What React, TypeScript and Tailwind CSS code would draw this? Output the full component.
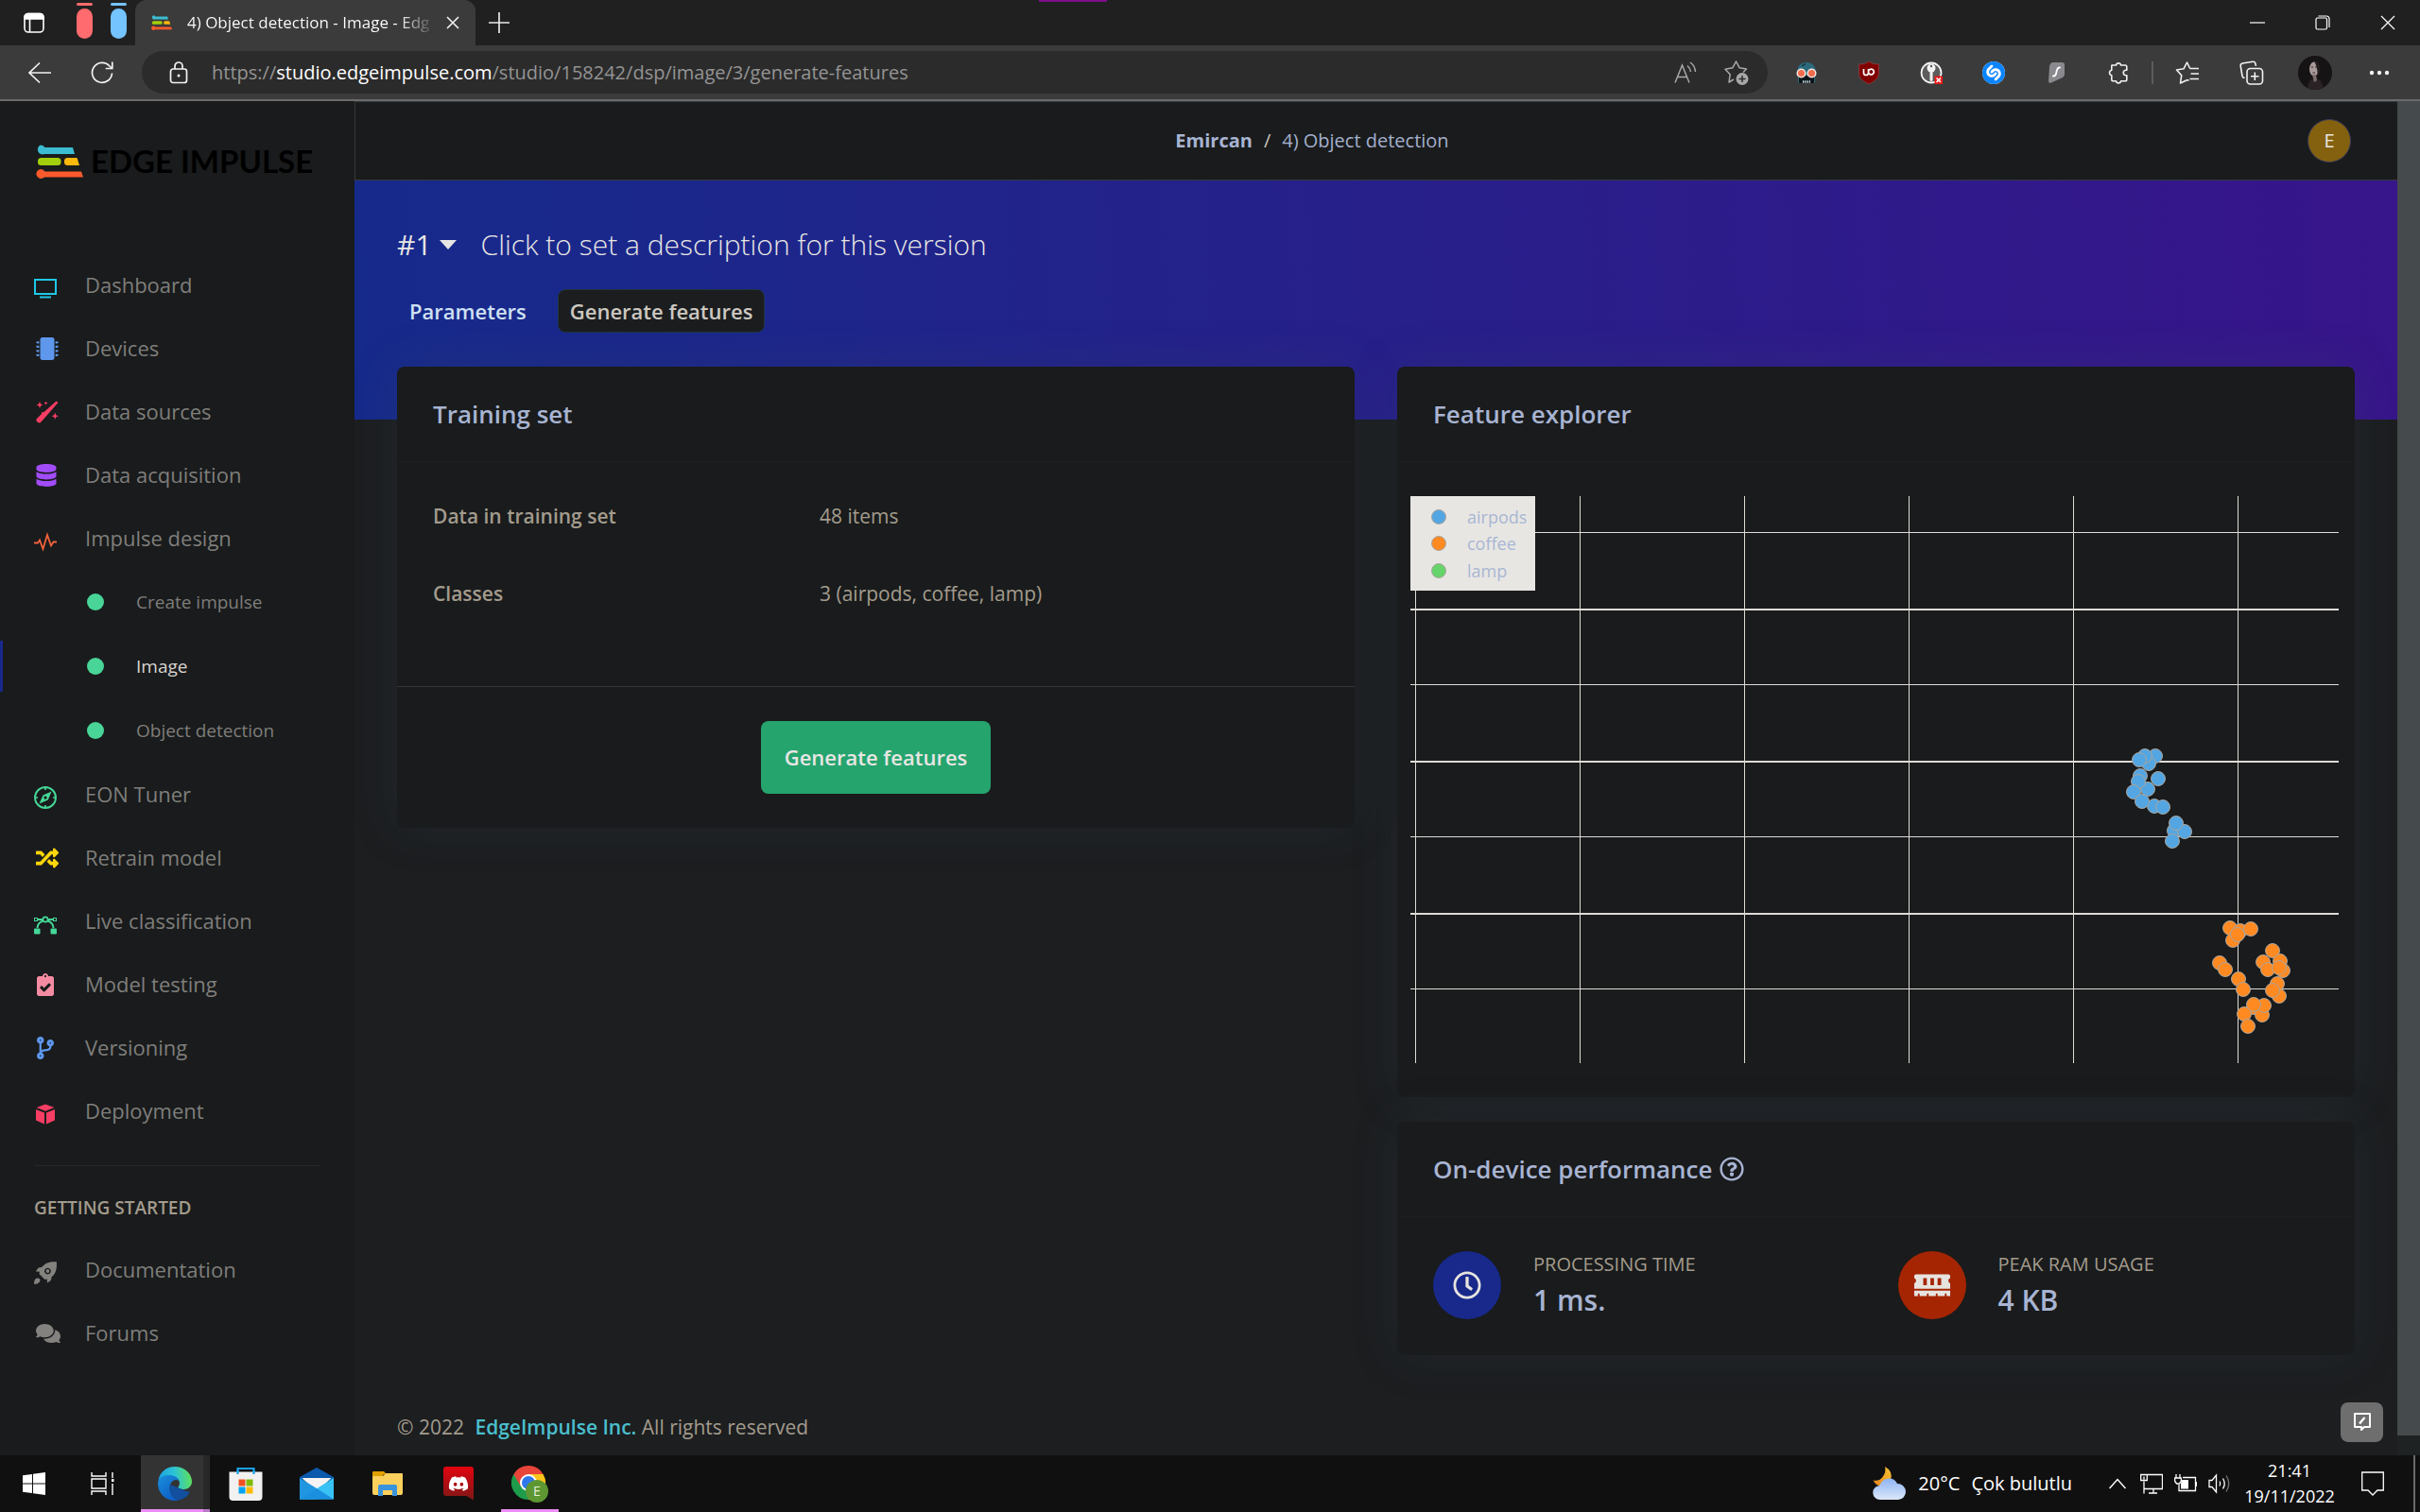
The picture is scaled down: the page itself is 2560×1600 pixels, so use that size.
import React from "react";
import {
  FaMicrochip,
  FaDatabase,
  FaRandom,
  FaClipboardCheck,
  FaCodeBranch,
  FaComments,
  FaRegQuestionCircle,
  FaRegClock,
  FaMemory,
  FaDiscord,
} from "react-icons/fa";
import { SiShazam } from "react-icons/si";

/* ---------- browser chrome ---------- */

function EdgeImpulseMark({ className }: { className: string }) {
  return (
    <svg viewBox="0 0 50 36" className={className} aria-hidden="true">
      <path d="M5 0a5 5 0 0 1 4.500 2.500H39L41 9.500H9A5 5 0 1 1 5 0Z" fill="#3bbcd0" transform="translate(0 .5)" />
      <rect x="2" y="14" width="24.500" height="8" rx="3.500" fill="#a3cf0c" />
      <path d="M33.500 14h10l2.500 8H33.500a3.500 3.500 0 0 1-3.500-3.500v-1a3.500 3.500 0 0 1 3.500-3.500Z" fill="#fdb80e" />
      <path d="M5 26a5 5 0 0 1 4.500 2.500H48L50 34.500H9A5 5 0 1 1 5 26Z" fill="#fb5a2c" />
    </svg>
  );
}

function TabStrip() {
  return (
    <div className="flex h-12 items-stretch bg-[#202020]">
      <button aria-label="Tab actions" className="flex w-[72px] items-center justify-center">
        <svg viewBox="0 0 24 24" className="size-6" fill="none" stroke="#fff" strokeWidth="1.600">
          <rect x="2" y="2.500" width="20" height="19.500" rx="4" />
          <path d="M2 8V6a3.500 3.500 0 0 1 3.500-3.500h13A3.500 3.500 0 0 1 22 6v2Z" fill="#fff" />
          <path d="M7.500 8v14" />
        </svg>
      </button>
      <div className="ml-[9px] flex w-[17px] flex-col gap-[3px] pt-[3px]">
        <span className="h-[3px] rounded-sm bg-[#ff6b6e]" />
        <button aria-label="Red tab group" className="h-8 rounded-full bg-[#ff6b6e]" />
      </div>
      <div className="ml-[19px] flex w-[17px] flex-col gap-[3px] pt-[3px]">
        <span className="h-[3px] rounded-sm bg-[#74c4ff]" />
        <button aria-label="Blue tab group" className="h-8 rounded-full bg-[#74c4ff]" />
      </div>
      <div className="ml-[9px] flex w-[360px] items-center rounded-t-xl bg-[#3b3b3b] pl-[17px] pr-4">
        <EdgeImpulseMark className="h-4 w-[22px] shrink-0" />
        <span className="ml-4 flex-1 whitespace-nowrap bg-gradient-to-r from-white from-85% to-transparent bg-clip-text text-[17px] leading-6 text-transparent">
          4) Object detection - Image - Edg
        </span>
        <button aria-label="Close tab" className="ml-2.5">
          <svg viewBox="0 0 16 16" className="size-4" stroke="#f2f2f2" strokeWidth="1.600">
            <path d="M2 2l12 12M14 2L2 14" />
          </svg>
        </button>
      </div>
      <button aria-label="New tab" className="ml-3.5">
        <svg viewBox="0 0 22 22" className="size-[22px]" stroke="#e8e8e8" strokeWidth="1.700">
          <path d="M11 0v22M0 11h22" />
        </svg>
      </button>
      <div className="ml-auto flex items-center">
        <button aria-label="Minimize" className="flex w-[69px] justify-center">
          <svg viewBox="0 0 16 16" className="size-4" stroke="#fff" strokeWidth="1.200">
            <path d="M0 8h16" />
          </svg>
        </button>
        <button aria-label="Restore" className="flex w-[69px] justify-center">
          <svg viewBox="0 0 16 16" className="size-4" stroke="#fff" strokeWidth="1.200" fill="none">
            <rect x="1" y="3" width="11.500" height="12" rx="1.500" />
            <path d="M3.500 1h8.500a3 3 0 0 1 3 3v9" />
          </svg>
        </button>
        <button aria-label="Close" className="flex w-[69px] justify-center">
          <svg viewBox="0 0 16 16" className="size-4" stroke="#fff" strokeWidth="1.200">
            <path d="M1 1l14 14M15 1L1 15" />
          </svg>
        </button>
      </div>
    </div>
  );
}

function ExtensionIcons() {
  return (
    <>
      <button aria-label="Mask extension" className="flex w-[66px] justify-center">
        <svg viewBox="0 0 24 24" className="size-6">
          <path d="M2 12C2 4 7 1 12 1s10 3 10 11l-1 5v6H3v-6Z" fill="#2b6a7c" />
          <path d="M4 15h16v8H4Z" fill="#0e1518" />
          <path d="M7 5q2-2 4-2" stroke="#153c48" strokeWidth="1.500" />
          <circle cx="6.500" cy="12.500" r="4.300" fill="#ee6c4d" stroke="#f6e6dd" strokeWidth="1.500" />
          <circle cx="17.500" cy="12.500" r="4.300" fill="#ee6c4d" stroke="#f6e6dd" strokeWidth="1.500" />
          <path d="M8 21.500h8" stroke="#cfe6ee" strokeWidth="2.500" strokeDasharray="1.300 1" />
        </svg>
      </button>
      <button aria-label="uBlock Origin" className="flex w-[66px] justify-center">
        <svg viewBox="0 0 24 26" className="h-[26px] w-6">
          <path d="M12 1c3 2.500 6 3 10.500 3v9c0 6-4 8.500-10.500 12C5.500 21.500 1.500 19 1.500 13V4C6 4 9 3.500 12 1Z" fill="#800000" stroke="#a24a4a" strokeWidth=".6" />
          <path d="M6.500 9v4a2.500 2.500 0 0 0 5 0V9M11.500 12a2.900 2.900 0 1 0 0-.1" fill="none" stroke="#fff" strokeWidth="1.700" />
        </svg>
      </button>
      <button aria-label="Password manager" className="flex w-[66px] justify-center">
        <svg viewBox="0 0 24 24" className="size-6">
          <circle cx="12" cy="12" r="10.500" fill="#5c5c5c" stroke="#f2f2f2" strokeWidth="1.800" />
          <circle cx="12" cy="7" r="4.500" fill="#f2f2f2" />
          <circle cx="12" cy="5" r="1.200" fill="#555" />
          <path d="M10.500 10h3v10l-1.500 1.500-1.500-1.500Z" fill="#f2f2f2" />
          <rect x="15.500" y="15.500" width="8.500" height="8.500" fill="#e81818" />
          <path d="M17.500 17.500l4.500 4.500M22 17.500L17.500 22" stroke="#fff" strokeWidth="1.600" />
        </svg>
      </button>
      <button aria-label="Shazam" className="flex w-[66px] justify-center">
        <span className="rounded-full bg-white">
          <SiShazam className="size-6 text-[#0a84ff]" />
        </span>
      </button>
      <button aria-label="Surfshark" className="flex w-[66px] justify-center">
        <svg viewBox="0 0 24 24" className="size-6">
          <path d="M9 1h9.500A2.500 2.500 0 0 1 21 3.500V13q0 3-3 4.500L7 22.500q-3 1-3-1.500L5 6q.5-5 4-5Z" fill="#8a8a8e" />
          <path d="M16 6.500c-5.500-.5-1.500 9.500-7 9" fill="none" stroke="#fff" strokeWidth="1.800" strokeLinecap="round" />
        </svg>
      </button>
      <button aria-label="Extensions" className="flex w-[66px] justify-center">
        <svg viewBox="0 0 24 24" className="size-6" fill="none" stroke="#f0f0f0" strokeWidth="1.600" strokeLinejoin="round">
          <path d="M5 4h4.500a2.600 2.600 0 0 1 5.100 0H19a1.800 1.800 0 0 1 1.800 1.800V9.300h-1.300a2.800 2.800 0 0 0 0 5.500h1.300V19A1.800 1.800 0 0 1 19 20.800h-4.400a2.600 2.600 0 0 1-5.100 0H6.600A1.800 1.800 0 0 1 4.800 19v-4.200a2.800 2.800 0 0 1 0-5.500V5Z" />
        </svg>
      </button>
    </>
  );
}

function Toolbar() {
  return (
    <div className="flex h-[59px] items-center border-b-2 border-[#6b6b6b] bg-[#3b3b3b]">
      <button aria-label="Back" className="ml-[30px]">
        <svg viewBox="0 0 24 24" className="size-6" fill="none" stroke="#f2f2f2" strokeWidth="1.700">
          <path d="M24 12H1M12 1.500L1 12l11 10.500" />
        </svg>
      </button>
      <button aria-label="Refresh" className="ml-[42px]">
        <svg viewBox="0 0 24 24" className="size-6" fill="none" stroke="#f2f2f2" strokeWidth="1.700">
          <path d="M22.500 12.500A10.500 10.500 0 1 1 20 5l2.500 2.500" />
          <path d="M22.800 .5v7h-7" />
        </svg>
      </button>
      <div className="ml-[30px] flex h-[45px] flex-1 items-center rounded-full bg-[#2b2b2b] pl-[27px] pr-5">
        <svg viewBox="0 0 24 24" className="size-6 shrink-0" fill="none" stroke="#f2f2f2" strokeWidth="1.700">
          <rect x="3.500" y="8" width="17" height="14.500" rx="2.500" />
          <path d="M8 8V5a4 4 0 0 1 8 0v3" />
          <circle cx="12" cy="15" r="1.500" fill="#f2f2f2" stroke="none" />
        </svg>
        <span className="ml-[23px] flex-1 text-xl text-[#949494]">
          https://<span className="text-white">studio.edgeimpulse.com</span>/studio/158242/dsp/image/3/generate-features
        </span>
        <button aria-label="Read aloud">
          <svg viewBox="0 0 24 24" className="size-6" fill="none" stroke="#a8a8a8" strokeWidth="1.500">
            <path d="M1 22.500L8.500 4 16 22.500M3.800 16.500h9.600M14 4.500q3 2.500 3.500 6.500M17 1q5 3.500 5.500 10" />
          </svg>
        </button>
        <button aria-label="Add to favorites" className="ml-[29px]">
          <svg viewBox="0 0 26 26" className="size-[26px]" fill="none" stroke="#a8a8a8" strokeWidth="1.500" strokeLinejoin="round">
            <path d="M10 20l-5 3 1.200-8.200L1 9.200l7.800-1.400L12.500 1l3.700 6.800 7.300 1.200-3.500 3.500" />
            <circle cx="19" cy="19.500" r="6.500" fill="#a8a8a8" stroke="none" />
            <path d="M19 16v7M15.500 19.500h7" stroke="#2b2b2b" />
          </svg>
        </button>
      </div>
      <div className="ml-2 flex items-center">
        <ExtensionIcons />
        <span className="mx-[2px] h-6 w-0.5 bg-[#5c5c5c]" />
        <button aria-label="Favorites" className="flex w-[68px] justify-center">
          <svg viewBox="0 0 26 26" className="size-[26px]" fill="none" stroke="#f2f2f2" strokeWidth="1.600" strokeLinejoin="round">
            <path d="M13 20.500L5.500 24l1.200-8.200L1.500 10l7.500-1.200L12.500 2l3.200 6.500M13 20.500l1.500.8" />
            <path d="M15.500 8.500H25M16.500 14H25M15.500 19.500H25" />
          </svg>
        </button>
        <button aria-label="Collections" className="flex w-[67px] justify-center">
          <svg viewBox="0 0 26 26" className="size-[26px]" fill="none" stroke="#f2f2f2" strokeWidth="1.600" strokeLinejoin="round">
            <rect x="8" y="8.500" width="16.500" height="16.500" rx="3.500" />
            <path d="M16.300 12.500v8.500M12 16.800h8.500M5.500 18.500q-2 0-2.500-2L1.200 5.800q-.2-2.300 2-2.800L14 1.200q2.300-.2 2.800 1.800l.7 2.800" />
          </svg>
        </button>
        <button aria-label="Profile" className="flex w-[68px] justify-center">
          <svg viewBox="0 0 36 36" className="size-9">
            <defs>
              <clipPath id="profile-clip">
                <circle cx="18" cy="18" r="18" />
              </clipPath>
            </defs>
            <g clipPath="url(#profile-clip)">
              <rect width="36" height="36" fill="#151314" />
              <path d="M10 36q0-12 8-12t9 12Z" fill="#2a2224" />
              <ellipse cx="17" cy="14" rx="5" ry="7.500" fill="#a89a98" />
              <path d="M17 5q7 0 6 12l-3 6q2-7-3-18Z" fill="#231d1f" />
              <path d="M15 20h4l1 6-3 2Z" fill="#7c6d6c" />
              <path d="M14 12h2M18 12h2M15.500 18h2.500" stroke="#3a2a2c" strokeWidth="1.200" />
            </g>
          </svg>
        </button>
        <button aria-label="Settings and more" className="flex w-[68px] justify-center">
          <svg viewBox="0 0 22 6" className="h-1.5 w-[22px]" fill="#f2f2f2">
            <circle cx="3" cy="3" r="2.200" />
            <circle cx="11" cy="3" r="2.200" />
            <circle cx="19" cy="3" r="2.200" />
          </svg>
        </button>
        <span className="w-[9px]" />
      </div>
    </div>
  );
}

/* ---------- sidebar ---------- */

/* Line icons sit slightly under the text's middle, so their canvas is 24x30. */
function LineIcon({ color, children }: { color: string; children: React.ReactNode }) {
  return (
    <svg viewBox="0 0 24 30" className="h-[30px] w-6" fill="none" stroke={color} strokeWidth="1.700" aria-hidden="true">
      {children}
    </svg>
  );
}

const tv = (
  <LineIcon color="#1fc8e8">
    <rect x="1" y="9" width="22" height="15" strokeWidth="2" />
    <path d="M6 27.500h12" strokeWidth="2" />
  </LineIcon>
);
const wand = (
  <svg viewBox="0 0 24 24" className="ml-0.5 size-6" fill="#f63d63" aria-hidden="true">
    <path d="M21.500 .5l2 1.500L5.500 22.500q-1.500 1.500-3 .8L.6 21.400q-.8-1.400.8-2.900L6 14l.3-2 2 .3Z" />
    <path d="M4 .8l1 2.600 2.600 1L5 5.400 4 8 3 5.400.4 4.400 3 3.400ZM10.500 .5l.6 1.500 1.500.6-1.500.6-.6 1.500-.6-1.500-1.500-.6L9.900 2ZM20.200 12.600l1 2.700 2.700 1-2.700 1-1 2.700-1-2.700-2.700-1 2.700-1Z" />
  </svg>
);
const pulse = (
  <LineIcon color="#f4623a">
    <path d="M0 19.500h4l2-3 3.500 9.500L14 11l4 11.500 2.500-4H24" strokeWidth="1.800" />
  </LineIcon>
);
const compass = (
  <LineIcon color="#45d898">
    <circle cx="12" cy="18" r="11" strokeWidth="1.900" />
    <path d="M12 7v3M12 26v3M1 18h3M20 18h3" />
    <path fillRule="evenodd" d="M18.500 11.500l-3.700 9-9.300 4 4-9ZM12 16.500a1.600 1.600 0 1 0 .1 0Z" fill="#45d898" stroke="none" />
  </LineIcon>
);
const vector = (
  <LineIcon color="#45d898">
    <circle cx="12" cy="13" r="2.600" />
    <path d="M3 13h6.500M14.500 13H21M3.500 22q.5-6 6-7.500M20.500 22q-.5-6-6-7.500" strokeWidth="1.900" />
    <rect x="0.500" y="11.500" width="3" height="3" fill="#1a1c1e" strokeWidth="1" />
    <rect x="20.500" y="11.500" width="3" height="3" fill="#1a1c1e" strokeWidth="1" />
    <rect x="0" y="22.500" width="6.500" height="6" rx="1" fill="#45d898" stroke="none" />
    <rect x="17.500" y="22.500" width="6.500" height="6" rx="1" fill="#45d898" stroke="none" />
  </LineIcon>
);
const box = (
  <LineIcon color="#f63d63">
    <g fill="#f63d63" stroke="none">
      <path d="M12 7.500l9.500 3.500-9.500 3.800L2.500 11Z" />
      <path d="M2 13l9 3.600V28.500L2 24.500Z" />
      <path d="M22 13l-9 3.600V28.500l9-4Z" />
    </g>
  </LineIcon>
);
const rocket = (
  <LineIcon color="#84827e">
    <g fill="#84827e" stroke="none">
      <path fillRule="evenodd" d="M23.800 6.200c-7-.4-12 1-15.800 5.800-2.500-.3-4.600.6-6 4.500l4 .2-.6 2.300 6 6 2.300-.6.2 4c3.900-1.400 4.800-3.500 4.500-6 4.800-3.800 6-9 5.400-16.200ZM14.500 12.700a3.400 3.400 0 1 1-.1 0Z" />
      <circle cx="14.500" cy="16" r="1.900" />
      <path d="M0 30q0-7 4-6.500T5.500 28Q4 30 0 30Z" />
    </g>
  </LineIcon>
);

type NavEntry = { label: string; icon?: React.ReactNode; active?: boolean };

const mainNav: NavEntry[] = [
  { label: "Dashboard", icon: tv },
  { label: "Devices", icon: <FaMicrochip className="ml-0.5 size-6 text-[#5e97ec]" /> },
  { label: "Data sources", icon: wand },
  { label: "Data acquisition", icon: <FaDatabase className="ml-px size-6 text-[#a24cf8]" /> },
  { label: "Impulse design", icon: pulse },
  { label: "Create impulse" },
  { label: "Image", active: true },
  { label: "Object detection" },
  { label: "EON Tuner", icon: compass },
  { label: "Retrain model", icon: <FaRandom className="ml-0.5 size-6 text-[#ffd60a]" /> },
  { label: "Live classification", icon: vector },
  { label: "Model testing", icon: <FaClipboardCheck className="size-6 text-[#f48ba2]" /> },
  { label: "Versioning", icon: <FaCodeBranch className="size-6 text-[#5e97ec]" /> },
  { label: "Deployment", icon: box },
];

const helpNav: NavEntry[] = [
  { label: "Documentation", icon: rocket },
  { label: "Forums", icon: <FaComments className="ml-0.5 size-[26px] text-[#84827e]" /> },
];

function NavItem({ label, icon, active }: NavEntry) {
  if (icon) {
    return (
      <a href="#" className="flex h-[67px] items-center pl-9 text-[22px] text-[#7f7e7b]">
        <span className="flex w-[54px]">{icon}</span>
        {label}
      </a>
    );
  }
  return (
    <a
      href="#"
      className={
        active
          ? "relative flex h-[68px] items-center pl-[92px] text-[19px] text-[#d8d4cf]"
          : "relative flex h-[68px] items-center pl-[92px] text-[19px] text-[#7f7e7b]"
      }
    >
      {active && <span className="absolute inset-y-[7px] left-0 w-[3px] bg-[#18298b]" />}
      <span className="mr-[34px] size-[18px] rounded-full bg-[#48d597]" />
      {label}
    </a>
  );
}

function Sidebar() {
  return (
    <aside className="w-[375px] shrink-0 bg-[#191b1c]">
      <a href="#" aria-label="Edge Impulse" className="ml-[38px] mt-[46px] flex h-9 items-center text-[33px] font-bold text-black">
        <EdgeImpulseMark className="mr-2 h-9 w-[50px]" />
        <span className="font-['Lato']">EDGE IMPULSE</span>
      </a>
      <nav className="mt-[79px]">
        {mainNav.map((n) => (
          <NavItem key={n.label} {...n} />
        ))}
      </nav>
      <hr className="ml-9 mr-9 mt-6 border-[#25282a]" />
      <h6 className="ml-9 mt-[26px] text-[19px] font-semibold leading-9 text-[#a39b8d]">GETTING STARTED</h6>
      <nav className="mt-3.5">
        {helpNav.map((n) => (
          <NavItem key={n.label} {...n} />
        ))}
      </nav>
    </aside>
  );
}

/* ---------- main content ---------- */

const cardClass = "rounded-lg bg-[#191b1c] shadow-[0_0_48px_rgba(60,75,85,0.22)]";

function CardHeader({ children }: { children: React.ReactNode }) {
  return (
    <div className="flex h-[101px] items-center border-b border-[#1d2021] px-[38px] text-[26px] font-semibold text-[#a8b4d2]">
      {children}
    </div>
  );
}

const airpods = [
  [788, 275], [781, 283], [777, 275], [771, 279], [772, 296], [791, 299], [780, 310], [770, 302],
  [765, 313], [787, 328], [774, 323], [796, 329], [808, 354], [819, 355], [810, 346], [806, 365],
];
const coffee = [
  [867, 457], [878, 460], [870, 470], [889, 458], [875, 464], [856, 494], [862, 501], [876, 511],
  [881, 522], [912, 481], [902, 493], [920, 492], [907, 501], [923, 502], [919, 499], [919, 529],
  [917, 516], [912, 523], [892, 541], [901, 549], [903, 539], [892, 538], [882, 548], [886, 561],
];

function FeaturePlot() {
  const verticals = [5, 179, 353, 527, 701, 875];
  const horizontals = [38, 119, 199, 280, 360, 441, 521];
  return (
    <svg viewBox="0 0 982 600" className="block w-full" role="img" aria-label="Feature explorer scatter plot">
      <g fill="#dfdcd7">
        {verticals.map((x) => (
          <rect key={x} x={x} y="0" width="1" height="600" />
        ))}
        {horizontals.map((y, i) => (
          <rect key={y} x="0" y={y} width="982" height={i % 2 ? 2 : 1} />
        ))}
      </g>
      <g stroke="#a9a49c" strokeWidth="1">
        {airpods.map(([x, y], i) => (
          <circle key={i} cx={x} cy={y} r="7.500" fill="#54a6e2" />
        ))}
        {coffee.map(([x, y], i) => (
          <circle key={i} cx={x} cy={y} r="7.500" fill="#ff8a22" />
        ))}
      </g>
      <rect width="132" height="100" fill="#e8e6e3" />
      <g stroke="#a9a49c" strokeWidth="1">
        <circle cx="30" cy="22" r="7.500" fill="#54a6e2" />
        <circle cx="30" cy="50" r="7.500" fill="#ff8a22" />
        <circle cx="30" cy="79" r="7.500" fill="#66d46a" />
      </g>
      <g fill="#a9b6d3" fontSize="18">
        <text x="60" y="29">airpods</text>
        <text x="60" y="57">coffee</text>
        <text x="60" y="86">lamp</text>
      </g>
    </svg>
  );
}

function Metric({ tone, icon, label, value }: { tone: string; icon: React.ReactNode; label: string; value: string }) {
  return (
    <div className="flex items-center px-[23px]">
      <span className={"flex size-[72px] items-center justify-center rounded-full text-[#e6e3df] " + tone}>{icon}</span>
      <div className="ml-[34px]">
        <div className="text-[20px] leading-7 text-[#a39b8d]">{label}</div>
        <div className="mt-1 text-[30px] font-semibold leading-10 text-[#a8b4d2]">{value}</div>
      </div>
    </div>
  );
}

function Main() {
  return (
    <main className="relative flex min-w-0 flex-1 flex-col bg-[#1c1e20]">
      <header className="flex h-[84px] items-center border-y border-l border-[#36393b] bg-[#191b1c]">
        <div className="flex-1 text-center text-[20px]">
          <a href="#" className="font-bold text-[#a8b4d2]">Emircan</a>
          <span className="mx-3 text-[#c8c3bb]">/</span>
          <span className="text-[#a3b0cc]">4) Object detection</span>
        </div>
        <button className="ml-[41px] mr-[49px] size-[46px] rounded-full border border-[#3a3a5c] bg-[#84610f] text-[20px] text-[#e8e6e3]">E</button>
      </header>

      <section className="bg-[linear-gradient(87deg,#162a8b,#37158a)] px-[45px] pb-[92px] pt-12">
        <div className="flex items-center text-[30px] leading-10 text-[#e8e6e3]">
          <button className="flex items-center">
            #1
            <svg viewBox="0 0 18 10" className="ml-2 h-2.5 w-[18px]" fill="#e8e6e3">
              <path d="M0 0h18L9 10Z" />
            </svg>
          </button>
          <h1 className="ml-[26px] font-light">Click to set a description for this version</h1>
        </div>
        <div className="mt-[27px] flex gap-5 text-[22px] font-semibold">
          <a href="#" className="flex h-[46px] items-center rounded-lg px-[13px] text-[#cfe0f2]">Parameters</a>
          <a href="#" className="flex h-[46px] items-center rounded-lg border border-[#20363f] bg-[#1b1d1f] px-3 text-[#cdc8c0]">Generate features</a>
        </div>
      </section>

      <div className="-mt-14 grid grid-cols-2 items-start gap-[45px] px-[45px]">
        <section className={cardClass}>
          <CardHeader>Training set</CardHeader>
          <div className="px-[38px] pb-14 pt-[17px]">
            <table className="w-full text-left text-[21px] text-[#a39b8d]">
              <tbody>
                <tr className="h-[82px]">
                  <th scope="row" className="w-[409px] font-semibold">Data in training set</th>
                  <td>48 items</td>
                </tr>
                <tr className="h-[82px]">
                  <th scope="row" className="font-semibold">Classes</th>
                  <td>3 (airpods, coffee, lamp)</td>
                </tr>
              </tbody>
            </table>
          </div>
          <div className="flex justify-center border-t border-[#33373a] py-9">
            <button className="h-[77px] rounded-lg bg-[#25a46e] px-[25px] text-[22px] font-semibold text-[#e8e6e3]">Generate features</button>
          </div>
        </section>

        <div className="flex flex-col gap-[26px]">
          <section className={cardClass}>
            <CardHeader>Feature explorer</CardHeader>
            <div className="pb-9 pl-3.5 pr-[17px] pt-9">
              <FeaturePlot />
            </div>
          </section>
          <section className={cardClass}>
            <CardHeader>
              On-device performance
              <FaRegQuestionCircle className="ml-2 size-[26px]" />
            </CardHeader>
            <div className="grid grid-cols-2 px-[15px] pb-[38px] pt-9">
              <Metric tone="bg-[#18298b]" icon={<FaRegClock className="size-[30px]" />} label="PROCESSING TIME" value="1 ms." />
              <Metric tone="bg-[#a52503]" icon={<FaMemory className="size-[38px]" />} label="PEAK RAM USAGE" value="4 KB" />
            </div>
          </section>
        </div>
      </div>

      <footer className="mt-auto px-[45px] pb-3.5 pt-6 text-[21px] leading-8 text-[#a39b8d]">
        © 2022 <a href="#" className="ml-1.5 font-semibold text-[#4bbfcd]">EdgeImpulse Inc.</a> All rights reserved
      </footer>

      <button aria-label="Send feedback" className="absolute bottom-3.5 right-[15px] flex h-[42px] w-[45px] items-center justify-center rounded-lg bg-[#6e6e6e]">
        <svg viewBox="0 0 20 22" className="h-[22px] w-5" fill="none" stroke="#fff" strokeWidth="2">
          <path d="M2 2h16v14h-6l-3 3v-3H2Z" strokeLinejoin="round" />
          <path d="M7 12.500l5.500-6.500" strokeWidth="2.400" />
        </svg>
      </button>
    </main>
  );
}

/* ---------- taskbar ---------- */

function TaskbarApps() {
  return (
    <>
      <button aria-label="Start" className="flex w-[72px] items-center justify-center">
        <svg viewBox="0 0 24 24" className="size-6" fill="#fff">
          <path d="M0 3.300L10 2v9.500H0ZM11 1.800L24 0v11.500H11ZM0 12.500h10V22L0 20.700ZM11 12.500h13V24l-13-1.800Z" />
        </svg>
      </button>
      <button aria-label="Task view" className="flex w-[72px] items-center justify-center">
        <svg viewBox="0 0 25 24" className="h-6 w-[25px]" fill="none" stroke="#fff" strokeWidth="1.400">
          <path d="M1 0v4h15V0M1 24v-4h15v4M1 7h15v10H1ZM23 0v6M23 12v12" />
          <rect x="22" y="7" width="2.500" height="3" fill="#fff" stroke="none" />
        </svg>
      </button>
      <button aria-label="Microsoft Edge" className="relative ml-[5px] flex w-[66px] items-center justify-center border-b-[3px] border-[#ec8df5] bg-[#333] pl-1.5 pt-[3px]">
        <svg viewBox="0 0 36 36" className="size-9">
          <defs>
            <linearGradient id="edge-top" x1="0" y1=".6" x2="1" y2=".5">
              <stop offset="0" stopColor="#1c9fe0" />
              <stop offset=".5" stopColor="#2cc3d5" />
              <stop offset="1" stopColor="#5fe05a" />
            </linearGradient>
            <linearGradient id="edge-left" x1="0" y1="0" x2=".6" y2="1">
              <stop offset="0" stopColor="#1b8fdc" />
              <stop offset="1" stopColor="#0c5fc4" />
            </linearGradient>
          </defs>
          <path d="M.5 15C1.500 6 9 0 18 0c10 0 18 7.500 18 15.500C36 21 32 24 27.500 24c-3.500 0-6-1.200-6-2.300 0-.8 1.500-1.500 1.500-4.200 0-4-4-7.500-9.500-7.500C7 10 2 12.500.5 15Z" fill="url(#edge-top)" />
          <path d="M0 18C0 12 6 9 12 9c5 0 9 2.500 10.500 6-5-3-10 1.500-10 7.500 0 6 4 11.500 9 13-1 .5-2.500.5-3.500.5C8 36 0 28 0 18Z" fill="url(#edge-left)" />
          <path d="M13.500 19c-2 9 5 14 11 13 4-.5 6.500-2.500 8.500-5.200.5-.8 0-1.200-.7-.9C24 29.500 15 27 13.500 19c-3 7 1 15 8 16.500 6-.7 10-4.500 12-8" fill="#124f9e" />
        </svg>
      </button>
      <span className="w-[7px] border-b-[3px] border-[#b878c4] bg-[#282828]" />
      <button aria-label="Microsoft Store" className="flex w-[75px] items-center justify-center">
        <svg viewBox="0 0 36 36" className="size-9">
          <path d="M9.500 8V2h17v6" fill="none" stroke="#1ba1e8" strokeWidth="2.200" />
          <path d="M.5 5.500h35V32a4 4 0 0 1-4 4h-27a4 4 0 0 1-4-4Z" fill="#f1f1f1" />
          <path d="M9.500 8V4M26.500 8V4" stroke="#1ba1e8" strokeWidth="2.200" />
          <path d="M10.500 13.500h7v7h-7Z" fill="#f25022" />
          <path d="M18.500 13.500h7v7h-7Z" fill="#7fba00" />
          <path d="M10.500 21.500h7v7h-7Z" fill="#00a4ef" />
          <path d="M18.500 21.500h7v7h-7Z" fill="#ffb900" />
        </svg>
      </button>
      <button aria-label="Mail" className="flex w-[75px] items-center justify-center">
        <svg viewBox="0 0 36 36" className="size-9">
          <path d="M0 11L18 1l18 10v4H0Z" fill="#0a59ad" />
          <path d="M2.500 12h31L18 27Z" fill="#f3f3f3" />
          <path d="M0 12l18 11v11.500H0Z" fill="#1f96df" />
          <path d="M36 12L0 34.500h36Z" fill="#38c2f5" />
          <path d="M18 23L36 34.500H0Z" fill="#1b8fdf" />
        </svg>
      </button>
      <button aria-label="File Explorer" className="flex w-[75px] items-center justify-center">
        <svg viewBox="0 0 32 28" className="h-7 w-8">
          <path d="M0 2q0-1 1-1h11l3 3h-3l-2 3H0Z" fill="#e2a100" />
          <path d="M0 6h11l3-3h17q1 0 1 1v20q0 2-2 2H2q-2 0-2-2Z" fill="#fcd05c" />
          <path d="M6 27V17q0-2 2-2h16q2 0 2 2v10h-5v-6H11v6Z" fill="#3b93dd" />
        </svg>
      </button>
      <button aria-label="Discord" className="flex w-[75px] items-center justify-center">
        <span className="relative flex h-9 w-8 items-center justify-center">
          <svg viewBox="0 0 32 36" className="absolute inset-0 h-9 w-8">
            <defs>
              <linearGradient id="discord-bg" x1="0" y1="0" x2="0" y2="1">
                <stop offset="0" stopColor="#e3040f" />
                <stop offset="1" stopColor="#7d1717" />
              </linearGradient>
            </defs>
            <path d="M3 0h26a3 3 0 0 1 3 3v32.500L24.500 31H3a3 3 0 0 1-3-3V3a3 3 0 0 1 3-3Z" fill="url(#discord-bg)" />
          </svg>
          <FaDiscord className="relative size-[22px] text-white" />
        </span>
      </button>
      <button aria-label="Google Chrome" className="mx-2 flex w-[61px] items-center justify-center border-b-[3px] border-[#ec8df5] pt-[3px]">
        <svg viewBox="0 0 39 39" className="size-[39px]">
          <path d="M18 18L2.400 9A18 18 0 0 1 33.600 9Z" fill="#e8443a" />
          <path d="M18 18L2.400 9A18 18 0 0 0 18 36l6-9Z" fill="#1e9c4c" />
          <path d="M18 18l0-9h15.600A18 18 0 0 1 18 36Z" fill="#fcc419" />
          <path d="M18 9H2.400L10.200 22.500Z" fill="#e8443a" />
          <circle cx="18" cy="18" r="9" fill="#fff" />
          <circle cx="18" cy="18" r="7" fill="#2f78ec" />
          <circle cx="27" cy="27" r="12" fill="#5d9732" />
          <text x="27" y="32" textAnchor="middle" fontSize="14" fill="#e6f0de">E</text>
        </svg>
      </button>
    </>
  );
}

function Taskbar() {
  return (
    <div className="flex h-[60px] items-stretch bg-[#101010] text-xl text-white">
      <TaskbarApps />
      <div className="ml-auto flex items-center">
        <svg viewBox="0 0 36 36" className="size-9">
          <defs>
            <linearGradient id="cloud" x1="0" y1="0" x2="0" y2="1">
              <stop offset="0" stopColor="#8fb4f2" />
              <stop offset="1" stopColor="#dbe8fb" />
            </linearGradient>
            <linearGradient id="moon" x1="1" y1="0" x2="0" y2="1">
              <stop offset="0" stopColor="#f7c234" />
              <stop offset="1" stopColor="#e8821c" />
            </linearGradient>
          </defs>
          <path d="M13 0q9 5 6 14-5 10-13 6-4-2-5.500-5.500 6 1.500 10-3.500T13 0Z" fill="url(#moon)" />
          <path d="M8 35a7.500 7.500 0 0 1-.5-15A10 10 0 0 1 26 18a8.500 8.500 0 0 1 1 17Z" fill="url(#cloud)" />
          <path d="M7.500 20a9 9 0 0 1 9 2" fill="none" stroke="#a9c4f2" strokeWidth="1.500" />
        </svg>
        <span className="ml-3">20°C</span>
        <span className="ml-3">Çok bulutlu</span>
        <button aria-label="Show hidden icons" className="ml-[39px]">
          <svg viewBox="0 0 18 12" className="h-3 w-[18px]" fill="none" stroke="#fff" strokeWidth="1.500">
            <path d="M.5 11L9 1.500 17.500 11" />
          </svg>
        </button>
        <svg viewBox="0 0 24 22" className="ml-[15px] h-[22px] w-6" fill="none" stroke="#fff" strokeWidth="1.300">
          <path d="M8 1.500h15.500v15H4M4 8.500v13M14 17v4M9 21h9" />
          <path d="M.7 1.500h6.600v6H.7ZM4 3.500v3" />
        </svg>
        <svg viewBox="0 0 24 22" className="ml-3 h-[22px] w-6" fill="none" stroke="#fff" strokeWidth="1.300">
          <path d="M9 4.500h13.500v14H5V12M23.500 9v5" />
          <path d="M2 1v4M6 1v4M.7 5h6.600v3.500L5.500 11h-3L.7 8.500Z" />
          <path d="M8 7h7v9.500H7V11Z" fill="#fff" stroke="none" />
        </svg>
        <svg viewBox="0 0 24 22" className="ml-3 h-[22px] w-6" fill="none" stroke="#fff" strokeWidth="1.300">
          <path d="M1 7.500h3L8.500 2v18L4 14.500H1Z" />
          <path d="M12 8.500q1.500 2.500 0 5M15.500 5.500q3.500 5.500 0 11" />
          <path d="M19 2.500q5.500 8.500 0 17" stroke="#777" />
        </svg>
        <div className="ml-[14px] w-24 whitespace-nowrap text-center text-[18px] leading-[27px]">
          <div>21:41</div>
          <div>19/11/2022</div>
        </div>
        <button aria-label="Notifications" className="ml-7 mr-[31px]">
          <svg viewBox="0 0 24 26" className="h-[26px] w-6" fill="none" stroke="#fff" strokeWidth="1.300">
            <path d="M.7 1h22.600v19H17l-5 5-5-5H.7Z" />
          </svg>
        </button>
        <span className="mr-[5px] h-[60px] w-0.5 bg-[#6a6a6a]" />
      </div>
    </div>
  );
}

export default function App() {
  return (
    <div className="relative flex min-h-screen flex-col bg-[#191b1c] font-['Open_Sans',sans-serif]">
      <span className="absolute left-[1099px] top-0 h-0.5 w-[72px] bg-[#7d0f86]" />
      <TabStrip />
      <Toolbar />
      <div className="flex flex-1">
        <Sidebar />
        <Main />
        <div className="flex w-6 shrink-0 flex-col bg-[#1f2223]">
          <span className="mb-[21px] flex-1 bg-[#454a4c]" />
        </div>
      </div>
      <Taskbar />
    </div>
  );
}
